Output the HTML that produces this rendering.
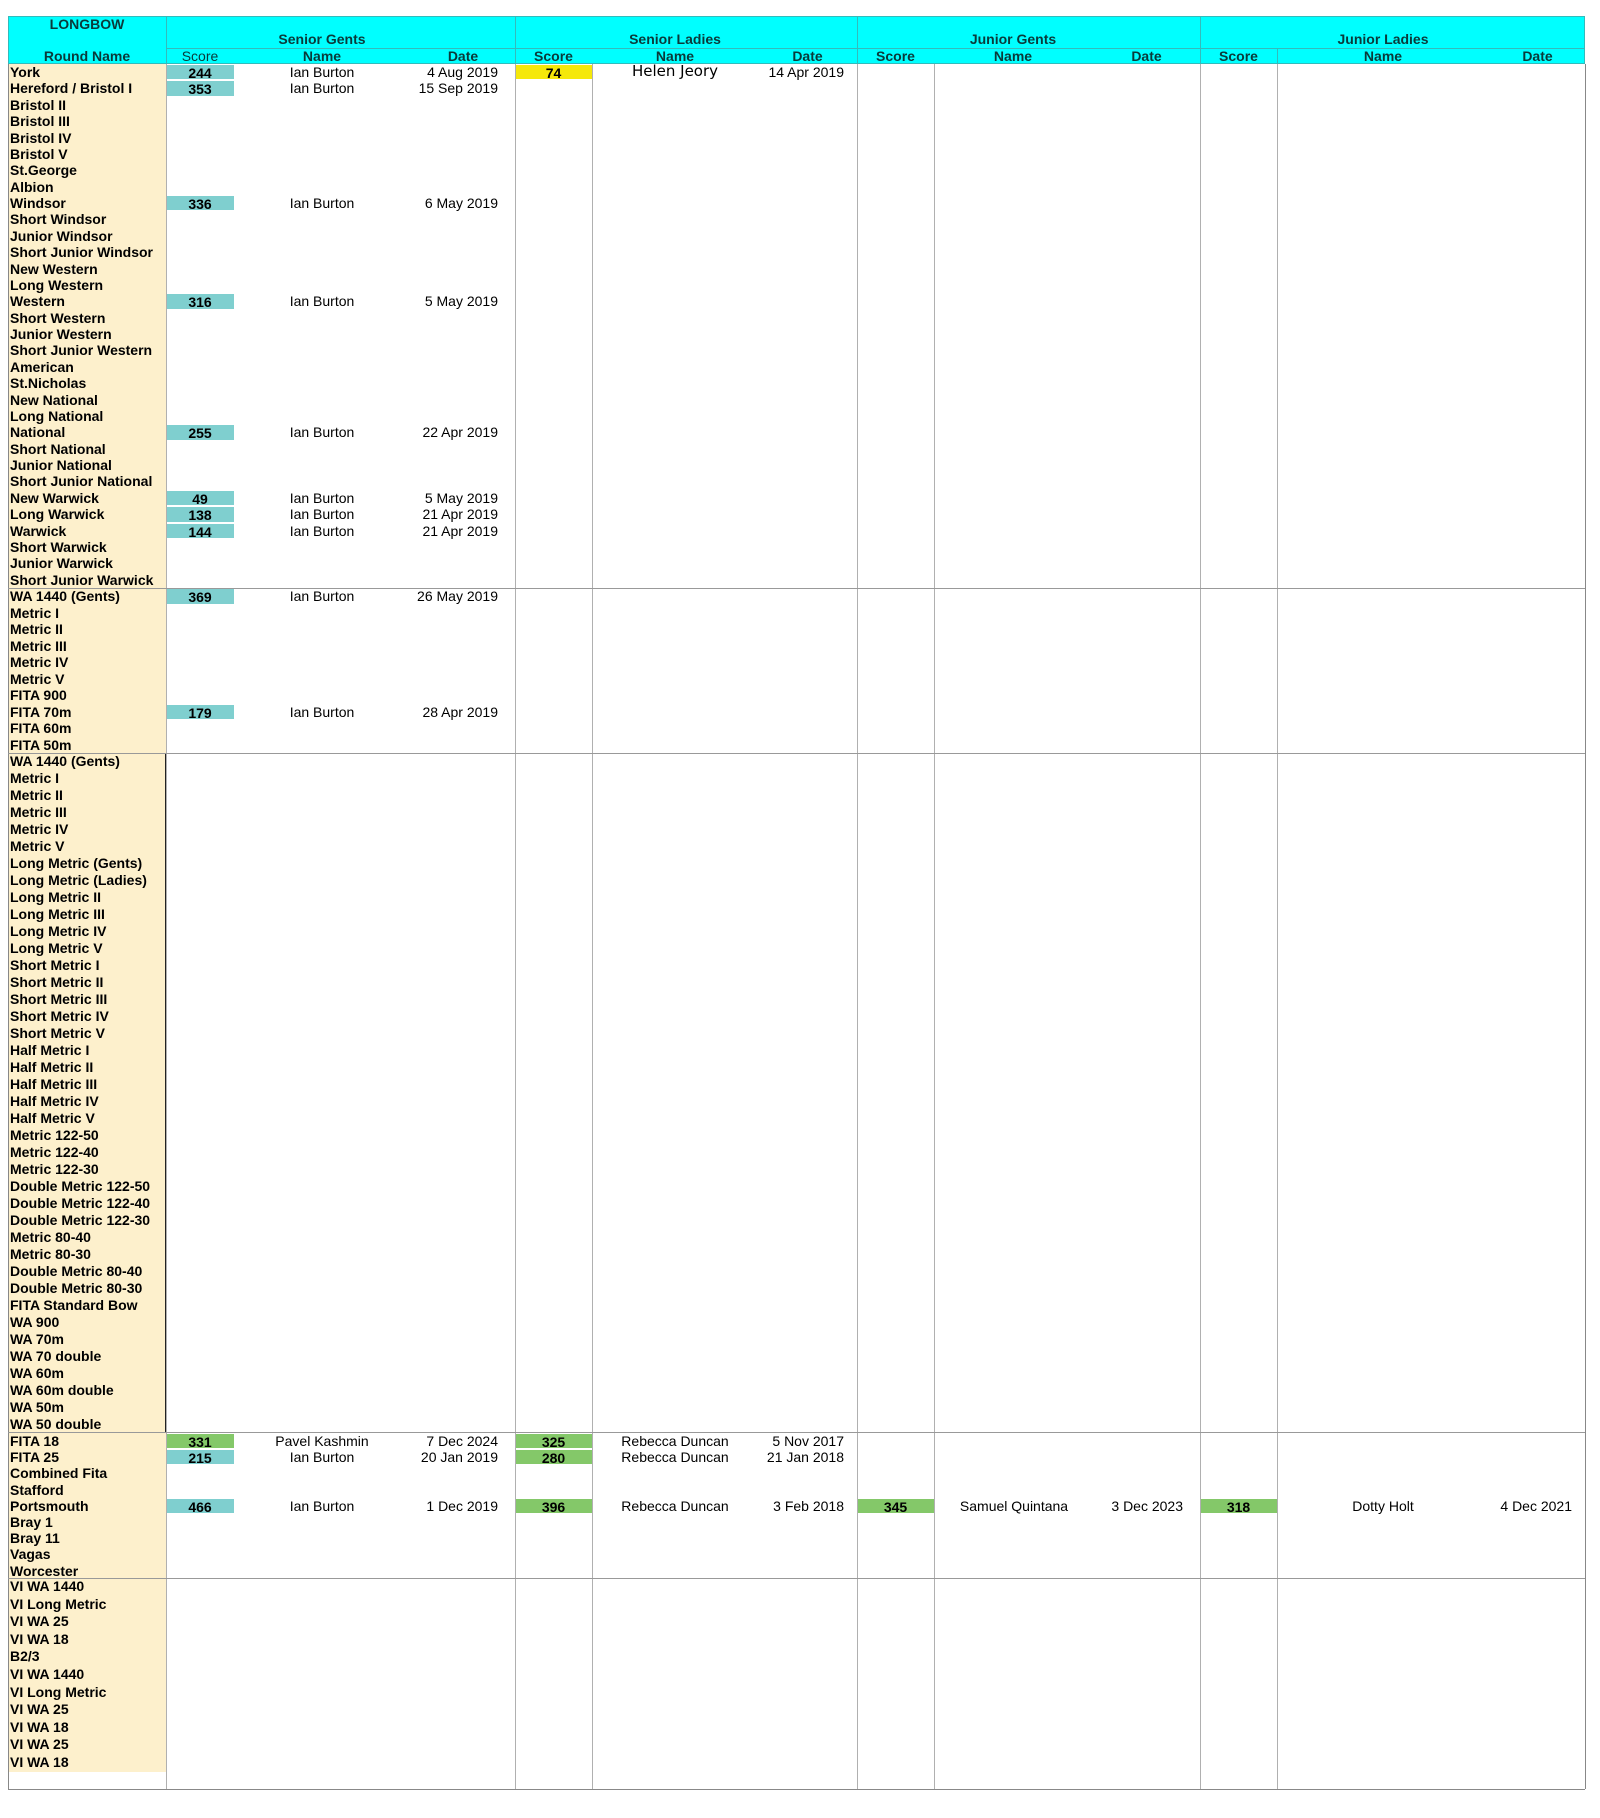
<!DOCTYPE html>
<html><head><meta charset="utf-8"><style>
*{margin:0;padding:0;box-sizing:border-box}
body{width:1600px;height:1818px;background:#fff;position:relative;font-family:"Liberation Sans",Arial,sans-serif;color:#000;overflow:hidden}
.a{position:absolute}
.hd{font-weight:bold;font-size:14px;color:#0a3a3a;text-align:center}
.g{position:absolute;left:8px;width:1577px}
.peach{position:absolute;left:0;top:0;width:158px;background:#fdf0cc}
.r{position:relative;font-size:14px;font-weight:bold;white-space:nowrap}
.r>b{position:absolute;left:2px;top:0}
.s{position:absolute;top:1px;bottom:1px;text-align:center;font-weight:bold;font-size:14px}
.t{background:#7fcfcf;left:158px;width:68px}
.gr{background:#84c869}
.y{background:#f5e80a}
.sl{left:507px;width:77px}
.jg{left:849px;width:77px}
.jl{left:1192px;width:77px}
.nm{position:absolute;font-weight:normal;font-size:14px;text-align:center;width:240px}
.dt{position:absolute;font-weight:normal;font-size:14px;text-align:right;width:150px}
.vl{position:absolute;width:1px;background:#b0b0b0;top:64px;height:1725px}
.hl{position:absolute;left:8px;width:1577px;height:1px;background:#999}
</style></head><body>
<!-- header -->
<div class="a" style="left:8px;top:16px;width:1577px;height:48px;background:#00ffff;border:1px solid #3bb;"></div>
<div class="a" style="left:166px;top:48px;width:1419px;height:1px;background:#3bb"></div>
<div class="a" style="left:8px;top:63px;width:1577px;height:1px;background:#3bb"></div>
<div class="a" style="left:166px;top:16px;width:1px;height:48px;background:#3bb"></div>
<div class="a" style="left:515px;top:16px;width:1px;height:48px;background:#3bb"></div>
<div class="a" style="left:857px;top:16px;width:1px;height:48px;background:#3bb"></div>
<div class="a" style="left:1200px;top:16px;width:1px;height:48px;background:#3bb"></div>
<div class="a" style="left:1277px;top:48px;width:1px;height:16px;background:#3bb"></div>
<div class="a hd" style="left:8px;top:16px;width:158px">LONGBOW</div>
<div class="a hd" style="left:222px;top:31px;width:200px">Senior Gents</div>
<div class="a hd" style="left:575px;top:31px;width:200px">Senior Ladies</div>
<div class="a hd" style="left:913px;top:31px;width:200px">Junior Gents</div>
<div class="a hd" style="left:1283px;top:31px;width:200px">Junior Ladies</div>
<div class="a hd" style="left:8px;top:48px;width:158px">Round Name</div>
<div class="a hd" style="left:166px;top:48px;width:68px;font-weight:normal">Score</div>
<div class="a hd" style="left:262px;top:48px;width:120px">Name</div>
<div class="a hd" style="left:423px;top:48px;width:80px">Date</div>
<div class="a hd" style="left:515px;top:48px;width:77px">Score</div>
<div class="a hd" style="left:615px;top:48px;width:120px">Name</div>
<div class="a hd" style="left:765px;top:48px;width:85px">Date</div>
<div class="a hd" style="left:857px;top:48px;width:77px">Score</div>
<div class="a hd" style="left:953px;top:48px;width:120px">Name</div>
<div class="a hd" style="left:1104px;top:48px;width:85px">Date</div>
<div class="a hd" style="left:1200px;top:48px;width:77px">Score</div>
<div class="a hd" style="left:1323px;top:48px;width:120px">Name</div>
<div class="a hd" style="left:1495px;top:48px;width:85px">Date</div>

<!-- G1 -->
<div class="g" style="top:64px;height:524px">
<div class="peach" style="height:524px"></div>
<div style="position:relative">
<div class="r" style="height:16.38px"><b>York</b><span class="s t">244</span><span class="nm" style="left:194px">Ian Burton</span><span class="dt" style="left:340px">4 Aug 2019</span><span class="s y sl">74</span><span class="nm" style="left:547px;font-family:'DejaVu Sans',sans-serif;font-size:15px;top:-2px">Helen Jeory</span><span class="dt" style="left:686px">14 Apr 2019</span></div>
<div class="r" style="height:16.38px"><b>Hereford / Bristol I</b><span class="s t">353</span><span class="nm" style="left:194px">Ian Burton</span><span class="dt" style="left:340px">15 Sep 2019</span></div>
<div class="r" style="height:16.38px"><b>Bristol II</b></div>
<div class="r" style="height:16.38px"><b>Bristol III</b></div>
<div class="r" style="height:16.38px"><b>Bristol IV</b></div>
<div class="r" style="height:16.38px"><b>Bristol V</b></div>
<div class="r" style="height:16.38px"><b>St.George</b></div>
<div class="r" style="height:16.38px"><b>Albion</b></div>
<div class="r" style="height:16.38px"><b>Windsor</b><span class="s t">336</span><span class="nm" style="left:194px">Ian Burton</span><span class="dt" style="left:340px">6 May 2019</span></div>
<div class="r" style="height:16.38px"><b>Short Windsor</b></div>
<div class="r" style="height:16.38px"><b>Junior Windsor</b></div>
<div class="r" style="height:16.38px"><b>Short Junior Windsor</b></div>
<div class="r" style="height:16.38px"><b>New Western</b></div>
<div class="r" style="height:16.38px"><b>Long Western</b></div>
<div class="r" style="height:16.38px"><b>Western</b><span class="s t">316</span><span class="nm" style="left:194px">Ian Burton</span><span class="dt" style="left:340px">5 May 2019</span></div>
<div class="r" style="height:16.38px"><b>Short Western</b></div>
<div class="r" style="height:16.38px"><b>Junior Western</b></div>
<div class="r" style="height:16.38px"><b>Short Junior Western</b></div>
<div class="r" style="height:16.38px"><b>American</b></div>
<div class="r" style="height:16.38px"><b>St.Nicholas</b></div>
<div class="r" style="height:16.38px"><b>New National</b></div>
<div class="r" style="height:16.38px"><b>Long National</b></div>
<div class="r" style="height:16.38px"><b>National</b><span class="s t">255</span><span class="nm" style="left:194px">Ian Burton</span><span class="dt" style="left:340px">22 Apr 2019</span></div>
<div class="r" style="height:16.38px"><b>Short National</b></div>
<div class="r" style="height:16.38px"><b>Junior National</b></div>
<div class="r" style="height:16.38px"><b>Short Junior National</b></div>
<div class="r" style="height:16.38px"><b>New Warwick</b><span class="s t">49</span><span class="nm" style="left:194px">Ian Burton</span><span class="dt" style="left:340px">5 May 2019</span></div>
<div class="r" style="height:16.38px"><b>Long Warwick</b><span class="s t">138</span><span class="nm" style="left:194px">Ian Burton</span><span class="dt" style="left:340px">21 Apr 2019</span></div>
<div class="r" style="height:16.38px"><b>Warwick</b><span class="s t">144</span><span class="nm" style="left:194px">Ian Burton</span><span class="dt" style="left:340px">21 Apr 2019</span></div>
<div class="r" style="height:16.38px"><b>Short Warwick</b></div>
<div class="r" style="height:16.38px"><b>Junior Warwick</b></div>
<div class="r" style="height:16.38px"><b>Short Junior Warwick</b></div>
</div></div>

<!-- G2 -->
<div class="g" style="top:588px;height:165px">
<div class="peach" style="height:165px"></div>
<div style="position:relative">
<div class="r" style="height:16.5px"><b>WA 1440 (Gents)</b><span class="s t">369</span><span class="nm" style="left:194px">Ian Burton</span><span class="dt" style="left:340px">26 May 2019</span></div>
<div class="r" style="height:16.5px"><b>Metric I</b></div>
<div class="r" style="height:16.5px"><b>Metric II</b></div>
<div class="r" style="height:16.5px"><b>Metric III</b></div>
<div class="r" style="height:16.5px"><b>Metric IV</b></div>
<div class="r" style="height:16.5px"><b>Metric V</b></div>
<div class="r" style="height:16.5px"><b>FITA 900</b></div>
<div class="r" style="height:16.5px"><b>FITA 70m</b><span class="s t">179</span><span class="nm" style="left:194px">Ian Burton</span><span class="dt" style="left:340px">28 Apr 2019</span></div>
<div class="r" style="height:16.5px"><b>FITA 60m</b></div>
<div class="r" style="height:16.5px"><b>FITA 50m</b></div>
</div></div>

<!-- G3 -->
<div class="g" style="top:753px;height:680px">
<div class="peach" style="height:680px;border-right:1px solid #222;border-top:1px solid #222;border-bottom:1px solid #222"></div>
<div style="position:relative">
<div class="r" style="height:17px"><b>WA 1440 (Gents)</b></div>
<div class="r" style="height:17px"><b>Metric I</b></div>
<div class="r" style="height:17px"><b>Metric II</b></div>
<div class="r" style="height:17px"><b>Metric III</b></div>
<div class="r" style="height:17px"><b>Metric IV</b></div>
<div class="r" style="height:17px"><b>Metric V</b></div>
<div class="r" style="height:17px"><b>Long Metric (Gents)</b></div>
<div class="r" style="height:17px"><b>Long Metric (Ladies)</b></div>
<div class="r" style="height:17px"><b>Long Metric II</b></div>
<div class="r" style="height:17px"><b>Long Metric III</b></div>
<div class="r" style="height:17px"><b>Long Metric IV</b></div>
<div class="r" style="height:17px"><b>Long Metric V</b></div>
<div class="r" style="height:17px"><b>Short Metric I</b></div>
<div class="r" style="height:17px"><b>Short Metric II</b></div>
<div class="r" style="height:17px"><b>Short Metric III</b></div>
<div class="r" style="height:17px"><b>Short Metric IV</b></div>
<div class="r" style="height:17px"><b>Short Metric V</b></div>
<div class="r" style="height:17px"><b>Half Metric I</b></div>
<div class="r" style="height:17px"><b>Half Metric II</b></div>
<div class="r" style="height:17px"><b>Half Metric III</b></div>
<div class="r" style="height:17px"><b>Half Metric IV</b></div>
<div class="r" style="height:17px"><b>Half Metric V</b></div>
<div class="r" style="height:17px"><b>Metric 122-50</b></div>
<div class="r" style="height:17px"><b>Metric 122-40</b></div>
<div class="r" style="height:17px"><b>Metric 122-30</b></div>
<div class="r" style="height:17px"><b>Double Metric 122-50</b></div>
<div class="r" style="height:17px"><b>Double Metric 122-40</b></div>
<div class="r" style="height:17px"><b>Double Metric 122-30</b></div>
<div class="r" style="height:17px"><b>Metric 80-40</b></div>
<div class="r" style="height:17px"><b>Metric 80-30</b></div>
<div class="r" style="height:17px"><b>Double Metric 80-40</b></div>
<div class="r" style="height:17px"><b>Double Metric 80-30</b></div>
<div class="r" style="height:17px"><b>FITA Standard Bow</b></div>
<div class="r" style="height:17px"><b>WA 900</b></div>
<div class="r" style="height:17px"><b>WA 70m</b></div>
<div class="r" style="height:17px"><b>WA 70 double</b></div>
<div class="r" style="height:17px"><b>WA 60m</b></div>
<div class="r" style="height:17px"><b>WA 60m double</b></div>
<div class="r" style="height:17px"><b>WA 50m</b></div>
<div class="r" style="height:17px"><b>WA 50 double</b></div>
</div></div>

<!-- G4 -->
<div class="g" style="top:1433px;height:145px">
<div class="peach" style="height:145px"></div>
<div style="position:relative">
<div class="r" style="height:16.2px"><b>FITA 18</b><span class="s t gr">331</span><span class="nm" style="left:194px">Pavel Kashmin</span><span class="dt" style="left:340px">7 Dec 2024</span><span class="s gr sl">325</span><span class="nm" style="left:547px">Rebecca Duncan</span><span class="dt" style="left:686px">5 Nov 2017</span></div>
<div class="r" style="height:16.2px"><b>FITA 25</b><span class="s t">215</span><span class="nm" style="left:194px">Ian Burton</span><span class="dt" style="left:340px">20 Jan 2019</span><span class="s gr sl">280</span><span class="nm" style="left:547px">Rebecca Duncan</span><span class="dt" style="left:686px">21 Jan 2018</span></div>
<div class="r" style="height:16.2px"><b>Combined Fita</b></div>
<div class="r" style="height:16.2px"><b>Stafford</b></div>
<div class="r" style="height:16.2px"><b>Portsmouth</b><span class="s t">466</span><span class="nm" style="left:194px">Ian Burton</span><span class="dt" style="left:340px">1 Dec 2019</span><span class="s gr sl">396</span><span class="nm" style="left:547px">Rebecca Duncan</span><span class="dt" style="left:686px">3 Feb 2018</span><span class="s gr jg">345</span><span class="nm" style="left:886px">Samuel Quintana</span><span class="dt" style="left:1025px">3 Dec 2023</span><span class="s gr jl">318</span><span class="nm" style="left:1255px">Dotty Holt</span><span class="dt" style="left:1414px">4 Dec 2021</span></div>
<div class="r" style="height:16.2px"><b>Bray 1</b></div>
<div class="r" style="height:16.2px"><b>Bray 11</b></div>
<div class="r" style="height:16.2px"><b>Vagas</b></div>
<div class="r" style="height:16.2px"><b>Worcester</b></div>
</div></div>

<!-- G5 -->
<div class="g" style="top:1578px;height:211px">
<div class="peach" style="height:194px"></div>
<div style="position:relative">
<div class="r" style="height:17.6px"><b>VI WA 1440</b></div>
<div class="r" style="height:17.6px"><b>VI Long Metric</b></div>
<div class="r" style="height:17.6px"><b>VI WA 25</b></div>
<div class="r" style="height:17.6px"><b>VI WA 18</b></div>
<div class="r" style="height:17.6px"><b>B2/3</b></div>
<div class="r" style="height:17.6px"><b>VI WA 1440</b></div>
<div class="r" style="height:17.6px"><b>VI Long Metric</b></div>
<div class="r" style="height:17.6px"><b>VI WA 25</b></div>
<div class="r" style="height:17.6px"><b>VI WA 18</b></div>
<div class="r" style="height:17.6px"><b>VI WA 25</b></div>
<div class="r" style="height:17.6px"><b>VI WA 18</b></div>
</div></div>

<!-- grid lines -->
<div class="vl" style="left:8px;background:#888"></div>
<div class="vl" style="left:166px"></div>
<div class="vl" style="left:515px"></div>
<div class="vl" style="left:592px"></div>
<div class="vl" style="left:857px"></div>
<div class="vl" style="left:934px"></div>
<div class="vl" style="left:1200px"></div>
<div class="vl" style="left:1277px"></div>
<div class="vl" style="left:1585px;background:#888"></div>
<div class="hl" style="top:588px"></div>
<div class="hl" style="top:753px"></div>
<div class="hl" style="top:1432px"></div>
<div class="hl" style="top:1578px"></div>
<div class="hl" style="top:1789px;background:#888"></div>
</body></html>
